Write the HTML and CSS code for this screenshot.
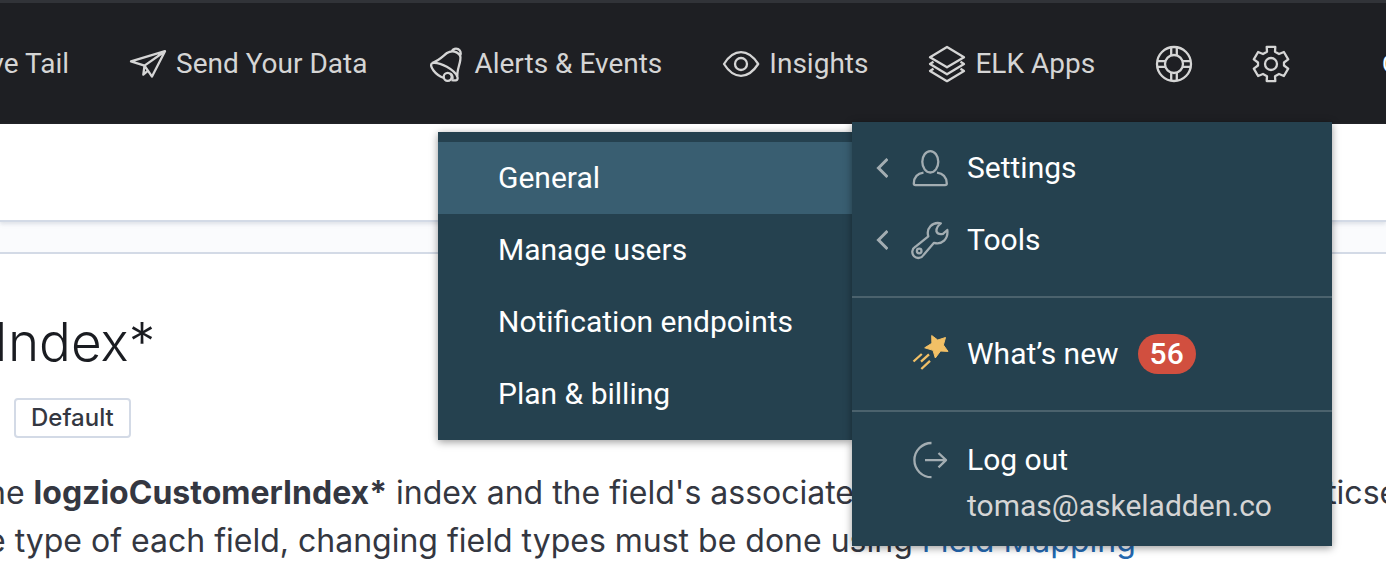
FILE: index.html
```html
<!DOCTYPE html>
<html lang="en">
<head>
<meta charset="utf-8">
<title>Index pattern</title>
<link rel="stylesheet" href="styles.css">
</head>
<body>
<header class="topbar">
  <nav class="nav" aria-label="Main">
    <a class="nav-item nav-item-first" href="#">ve Tail</a>
    <a class="nav-item" href="#">
      <svg class="icon" viewBox="0 0 36 36"><path d="M1 15.4 35 5.2 22 30.6 14.5 19.6ZM14.5 19.6 35 5.2M14.5 19.6 13.3 28.6 18 24.6"/></svg>
      Send Your Data</a>
    <a class="nav-item" href="#">
      <svg class="icon" viewBox="0 0 36 36"><path d="M4 17C11 15 15 10 19 7 25 3 34 7 32.300 14 31.500 20 28.500 25 29.500 31M4 17C12 15.500 27 24 29.500 31 30.500 35.500 26 34.500 23.500 34M4 17C1 20 7 29 16 32M23.800 5.200A4.300 4.300 0 1 1 32.200 9.500"/><circle cx="19.700" cy="30.800" r="4"/><path d="M22 27.500Q25 29 24.500 33"/></svg>
      Alerts &amp; Events</a>
    <a class="nav-item" href="#">
      <svg class="icon" viewBox="0 0 36 36"><path d="M1 18C6 10 12 6.200 18 6.200S30 10 35.200 18C30 26 24 29.800 18 29.800S6 26 1 18Z"/><circle cx="18" cy="18" r="6"/></svg>
      Insights</a>
    <a class="nav-item" href="#">
      <svg class="icon" viewBox="0 0 36 36"><path d="M18 1 35 11.300 18 21.300 1 11.300ZM4.500 15.800 1 18 18 28.300 35 18 31.500 15.800M4.500 22.800 1 25 18 35.200 35 25 31.500 22.800"/></svg>
      ELK Apps</a>
    <button class="nav-item" type="button" aria-label="Help">
      <svg class="icon" viewBox="0 0 36 36"><circle cx="18" cy="18" r="17"/><circle cx="18" cy="18" r="9"/><path d="M15.200 1V9.500M20.800 1V9.500M15.200 26.500V35M20.800 26.500V35M1 15.200H9.500M1 20.800H9.500M26.500 15.200H35M26.500 20.800H35"/></svg>
    </button>
    <button class="nav-item" type="button" aria-label="Settings menu" aria-expanded="true">
      <svg class="icon" viewBox="0 0 36 36"><path d="M13.700.900H22.300L22 5.800 26 8 30.900 6 35.200 13.300 31 16.500V19.500L35.200 22.700 30.900 30 26 28 22 30.200 22.300 35.100H13.700L14 30.200 10 28 5.100 30 .800 22.700 5 19.500V16.500L.800 13.300 5.100 6 10 8 14 5.800Z"/><circle cx="18" cy="18" r="6"/></svg>
    </button>
  </nav>
  <span class="account">C</span>
</header>

<div class="crumbs"></div>

<main class="panel">
  <h1 class="title">Index*</h1>
  <span class="tag">Default</span>
  <p class="lead">he <strong>logzioCustomerIndex*</strong> index and the field's associated core type as reported by Elasticsearch<br>e type of each field, changing field types must be done using <a class="link" href="#">Field Mapping</a></p>
</main>

<nav class="menu submenu" aria-label="Settings">
  <a class="submenu-item is-active" href="#">General</a>
  <a class="submenu-item" href="#">Manage users</a>
  <a class="submenu-item" href="#">Notification endpoints</a>
  <a class="submenu-item" href="#">Plan &amp; billing</a>
</nav>

<nav class="menu dropdown" aria-label="Account">
  <div class="group group-first">
    <a class="menu-item" href="#">
      <svg class="chevron" viewBox="0 0 12 20"><path d="M11.500 1 2.500 10 11.500 19"/></svg>
      <svg class="icon" viewBox="0 0 36 36"><ellipse cx="18.300" cy="11.800" rx="8" ry="10.700"/><path d="M11.500 22.700C5 23.500 2 28 1.800 33.500Q1.800 35.100 3.500 35.100H33Q34.800 35.100 34.800 33.500C34.500 28 31.500 23.500 25 22.700"/></svg>
      Settings</a>
    <a class="menu-item" href="#">
      <svg class="chevron" viewBox="0 0 12 20"><path d="M11.500 1 2.500 10 11.500 19"/></svg>
      <svg class="icon" viewBox="0 0 36 36"><path d="M16.300 14.300 3.300 24.800A6 6 0 1 0 11.500 33L22 20.800C30 23 36.500 17 35.300 8L31 11.800Q26 13 24.500 9.500 24 5 28.800 1.300C20 -.500 14 6.500 16.300 14.300Z"/><circle cx="7.200" cy="29" r="2.300"/></svg>
      Tools</a>
  </div>
  <div class="group">
    <a class="menu-item" href="#">
      <span class="chevron"></span>
      <svg class="icon icon-star" viewBox="0 0 36 36"><path class="star" d="M19.700-.500 25.700 4 33.500 1.500 31.400 9 36 15.400 28.500 15 23.300 22 21 14.300 12.700 11.800 19.900 7.300Z"/><path d="M9.800 18 1.500 25.500M17 18.300 9 25.700M18 24.900 9.300 33"/></svg>
      What’s new
      <span class="badge">56</span></a>
  </div>
  <div class="group group-last">
    <a class="menu-item" href="#">
      <span class="chevron"></span>
      <svg class="icon" viewBox="0 0 36 36"><path d="M19.500 1A17.100 17.100 0 0 0 19.500 35.200M13 18.200H34M26.500 11 34 18.200 26.500 25.400"/></svg>
      Log out</a>
    <div class="email">tomas@askeladden.co</div>
  </div>
</nav>
</body>
</html>
```
FILE: styles.css
```css
* {
  box-sizing: border-box;
}

body {
  margin: 0;
  min-height: 100vh;
  display: flex;
  flex-direction: column;
  position: relative;
  overflow: hidden;
  background: #fafbfd;
  font-family: Inter, sans-serif;
  color: #343741;
}

a {
  color: inherit;
  text-decoration: none;
}

.topbar {
  display: flex;
  align-items: center;
  justify-content: space-between;
  height: 124px;
  padding-top: 1px;
  border-top: 3px solid #313338;
  background: #1e1f23;
  overflow: hidden;
}

.nav {
  display: flex;
  align-items: center;
  gap: 61px;
}

.nav-item {
  display: flex;
  align-items: center;
  flex-shrink: 0;
  gap: 10px;
  padding: 0;
  border: 0;
  background: none;
  color: #d5d5d5;
  font-family: Roboto, sans-serif;
  font-size: 28px;
  line-height: 36px;
  white-space: nowrap;
}

.nav-item-first {
  justify-content: flex-end;
  width: 69px;
}

.icon {
  width: 36px;
  height: 36px;
  flex-shrink: 0;
  overflow: visible;
  fill: none;
  stroke: currentColor;
  stroke-width: 2.3;
  stroke-linejoin: round;
}

.account {
  width: 4px;
  overflow: hidden;
  color: #fff;
  font-family: Roboto, sans-serif;
  font-size: 24px;
}

.crumbs {
  height: 98px;
  border-bottom: 2px solid #d3dae6;
  background: #fff;
  box-shadow: 0 2px 4px rgba(152, 162, 179, 0.3);
}

.panel {
  flex: 1;
  margin-top: 30px;
  padding-top: 56px;
  border-top: 2px solid #d3dae6;
  background: #fff;
  overflow: hidden;
}

.title {
  margin: 0 0 0 -6px;
  color: #1a1c21;
  font-size: 53px;
  font-weight: 300;
  line-height: 64px;
}

.tag {
  display: inline-block;
  margin: 24px 0 0 14px;
  padding: 0 15px;
  border: 2px solid #d3dae6;
  border-radius: 4px;
  font-size: 24px;
  font-weight: 500;
  line-height: 36px;
}

.lead {
  margin: 31px 0 0 -13px;
  font-size: 32px;
  line-height: 48px;
  white-space: nowrap;
}

.link {
  color: #2468b0;
}

.menu {
  position: absolute;
  background: #25414f;
  color: #fff;
  font-family: Roboto, sans-serif;
  font-size: 30px;
  box-shadow: 0 2px 8px rgba(0, 0, 0, 0.4);
}

.submenu {
  top: 132px;
  right: 534px;
  width: 414px;
  padding: 10px 0;
}

.submenu-item {
  display: block;
  padding: 0 60px;
  line-height: 72px;
  white-space: nowrap;
}

.submenu-item.is-active {
  background: #395e71;
}

.dropdown {
  top: 122px;
  right: 54px;
  width: 480px;
}

.group {
  padding: 20px 0;
  border-bottom: 2px solid #4b626d;
}

.group-first {
  padding-top: 10px;
}

.group-last {
  padding: 12px 0 18px;
  border-bottom: 0;
}

.menu-item {
  display: flex;
  align-items: center;
  gap: 19px;
  padding-left: 24px;
  line-height: 72px;
}

.menu-item .icon {
  color: #a3adb2;
}

.menu-item .icon-star {
  color: #f2c066;
}

.icon-star .star {
  fill: currentColor;
  stroke-width: 1;
}

.chevron {
  width: 12px;
  height: 20px;
  margin-right: 5px;
  fill: none;
  stroke: #a3adb2;
  stroke-width: 3;
}

.badge {
  padding: 0 12px;
  border-radius: 20px;
  background: #d14f3f;
  font-weight: 500;
  line-height: 40px;
}

.group-last .menu-item {
  line-height: 48px;
  padding-top: 12px;
}

.email {
  padding-left: 115px;
  color: #d5d5d5;
  line-height: 44px;
}
```
